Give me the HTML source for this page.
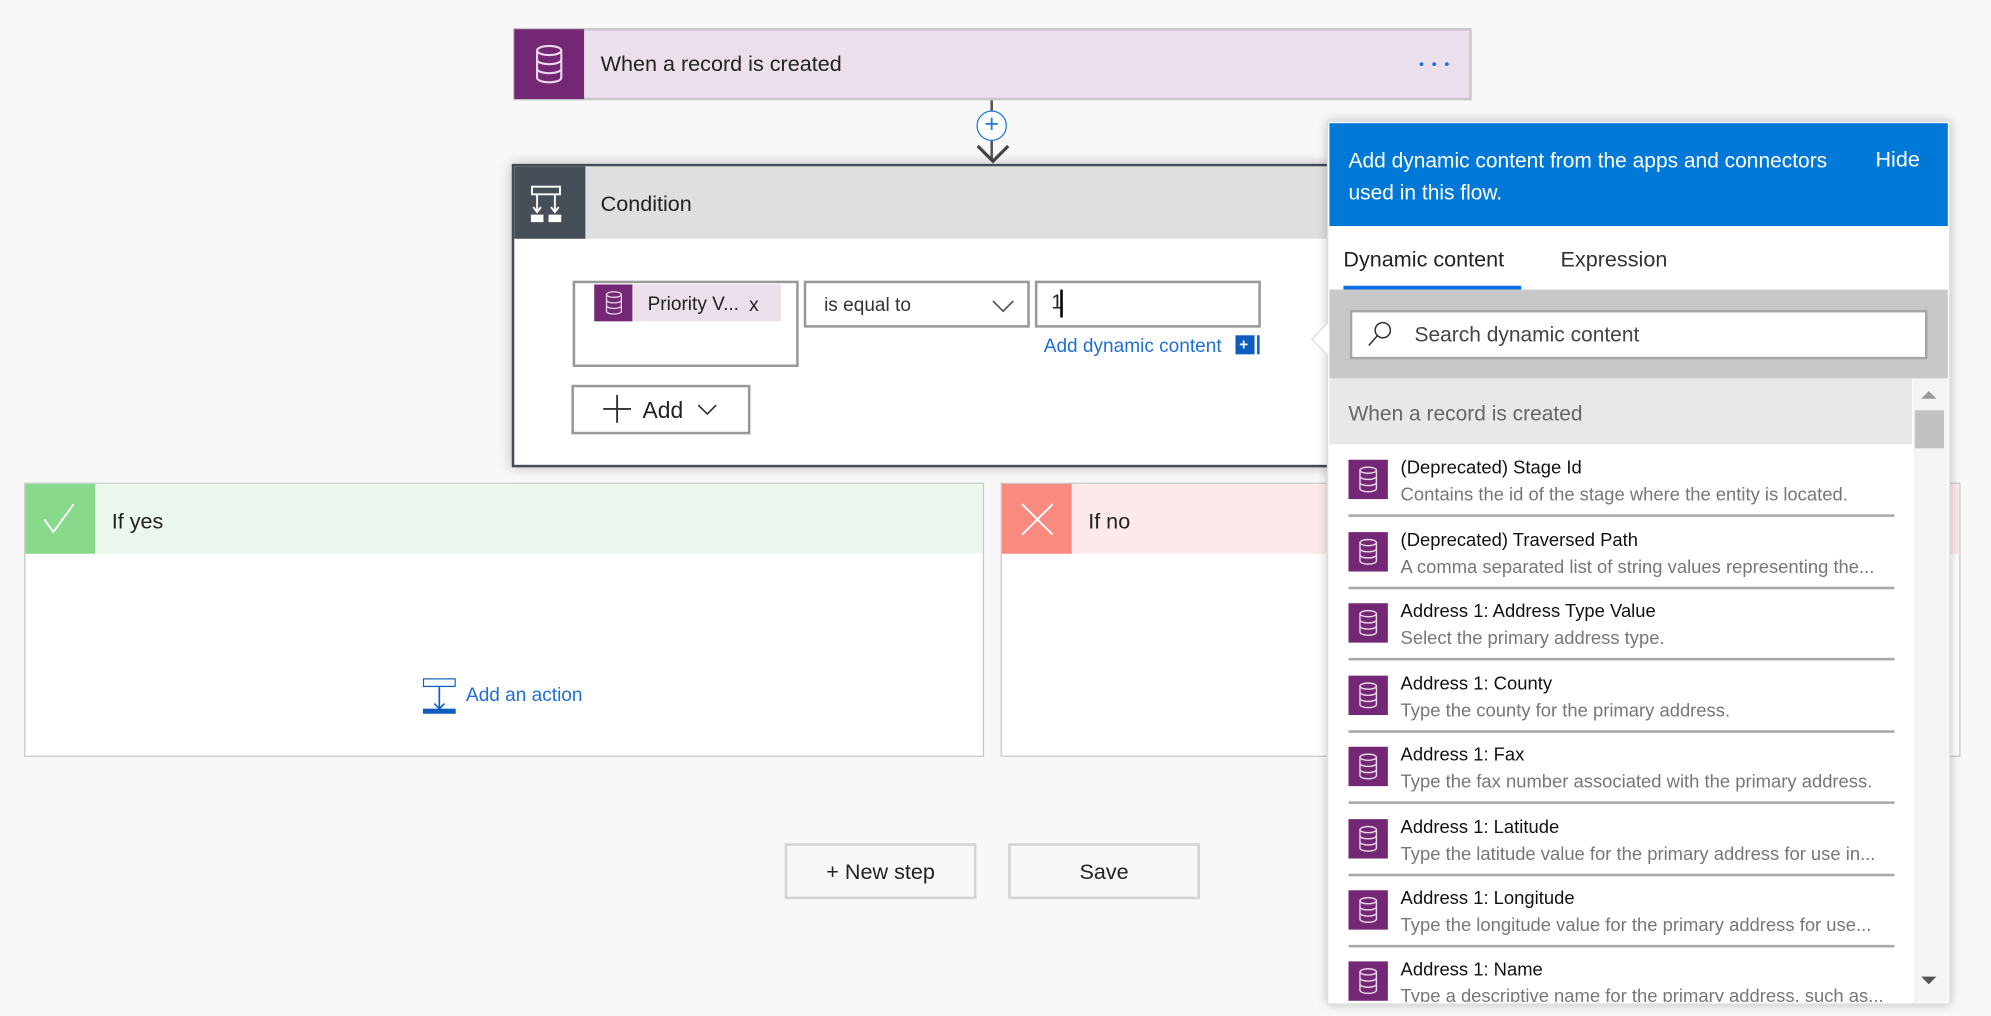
<!DOCTYPE html>
<html><head><meta charset="utf-8"><style>
*{box-sizing:border-box;margin:0;padding:0}
html,body{width:1991px;height:1016px;overflow:hidden;background:#f8f8f8;font-family:"Liberation Sans",sans-serif}
#w{position:absolute;left:0;top:0;width:1568px;height:800px;transform:scale(1.26977,1.27);transform-origin:0 0}
.a{position:absolute}
.db{position:absolute;background:#742774}
.t{white-space:nowrap;position:absolute}
.item{position:absolute;left:1062px;width:430px;height:57px;border-bottom:2px solid #a8a8a8}
.item .db{left:0;top:12px;width:31px;height:31px}
.item .h{position:absolute;left:41px;top:11px;font-size:14.5px;color:#111}
.item .d{position:absolute;left:41px;top:32px;font-size:14.5px;color:#777;white-space:nowrap}
.dot{position:absolute;top:49px;width:3px;height:3px;border-radius:50%;background:#1e6fd9}
</style></head><body><div id="w">
<svg width="0" height="0" style="position:absolute"><defs><symbol id="cyl" viewBox="0 0 20 26"><g fill="none" stroke="#e8d8e8" stroke-width="1.4"><ellipse cx="10" cy="4" rx="8" ry="3"/><path d="M2 4v18c0 1.7 3.6 3 8 3s8-1.3 8-3V4M2 10c0 1.7 3.6 3 8 3s8-1.3 8-3M2 16c0 1.7 3.6 3 8 3s8-1.3 8-3"/></g></symbol></defs></svg>

<!-- trigger -->
<div class="a" style="left:404px;top:22px;width:755px;height:57px;background:#ebdfeb;border:2px solid #c8c8c8"></div>
<div class="db" style="left:405px;top:23px;width:55px;height:55px"><svg style="position:absolute;left:15px;top:12px" width="25" height="31"><use href="#cyl"/></svg></div>
<div class="t" style="left:473px;top:41px;font-size:17px;color:#222">When a record is created</div>
<div class="dot" style="left:1118px"></div><div class="dot" style="left:1128px"></div><div class="dot" style="left:1138px"></div>

<!-- connector -->
<div class="a" style="left:780px;top:79px;width:2px;height:48px;background:#555"></div>
<div class="a" style="left:769px;top:87px;width:24px;height:24px;border:1.5px solid #1e7ad8;border-radius:50%;background:#fff;color:#1e7ad8;font-size:20px;line-height:20px;text-align:center">+</div>
<svg class="a" style="left:768px;top:112px" width="28" height="18"><path d="M2 3l12 12 12-12" stroke="#444" stroke-width="2.5" fill="none"/></svg>

<!-- condition -->
<div class="a" style="left:403px;top:129px;width:660px;height:239px;border:2px solid #444b55;background:#fff;box-shadow:0 0 10px rgba(0,0,0,.25)"></div>
<div class="a" style="left:405px;top:131px;width:660px;height:57px;background:#dedfe1"></div>
<div class="a" style="left:405px;top:131px;width:56px;height:57px;background:#464e58"><svg style="position:absolute;left:13px;top:14px" width="30" height="30"><g stroke="#fff" stroke-width="1.5" fill="none"><rect x="1" y="2" width="22" height="6"/><path d="M5 8v14M19 8v14M2 18l3 4 3-4M16 18l3 4 3-4"/></g><rect x="0" y="24" width="10" height="6" fill="#fff"/><rect x="14" y="24" width="10" height="6" fill="#fff"/></svg></div>
<div class="t" style="left:473px;top:151px;font-size:17px;color:#222">Condition</div>

<div class="a" style="left:451px;top:221px;width:178px;height:68px;border:2px solid #999;background:#fff"></div>
<div class="a" style="left:468px;top:224px;width:147px;height:29px;background:#ebdfeb"></div>
<div class="db" style="left:468px;top:224px;width:30px;height:29px"><svg style="position:absolute;left:8px;top:5px" width="15" height="19" viewBox="0 0 20 26"><use href="#cyl"/></svg></div>
<div class="t" style="left:510px;top:231px;font-size:15px;color:#222">Priority V...</div>
<div class="t" style="left:590px;top:232px;font-size:15px;color:#222">x</div>

<div class="a" style="left:633px;top:221px;width:178px;height:37px;border:2px solid #999;background:#fff"></div>
<div class="t" style="left:649px;top:232px;font-size:15px;color:#333">is equal to</div>
<svg class="a" style="left:781px;top:236px" width="18" height="10"><path d="M1 1l8 8 8-8" stroke="#555" fill="none" stroke-width="1.3"/></svg>
<div class="a" style="left:815px;top:221px;width:178px;height:37px;border:2px solid #999;background:#fff"></div>
<div class="t" style="left:828px;top:230px;font-size:16px;color:#222">1</div>
<div class="a" style="left:835px;top:228px;width:1.5px;height:22px;background:#000"></div>
<div class="t" style="left:822px;top:264px;font-size:15px;color:#1e6fd9">Add dynamic content</div>
<div class="a" style="left:973px;top:264px;width:19px;height:15px;background:#0f5dbf;color:#fff;font-size:12px;line-height:15px;padding-left:3px;font-weight:bold">+</div>
<div class="a" style="left:988px;top:264px;width:2px;height:15px;background:#fff"></div>

<div class="a" style="left:450px;top:303px;width:141px;height:39px;border:2px solid #999;background:#fff"></div>
<svg class="a" style="left:475px;top:311px" width="22" height="22"><path d="M11 0v22M0 11h22" stroke="#333" stroke-width="1.5"/></svg>
<div class="t" style="left:506px;top:313px;font-size:18px;color:#222">Add</div>
<svg class="a" style="left:549px;top:318px" width="16" height="10"><path d="M1 1l7 7 7-7" stroke="#333" fill="none" stroke-width="1.3"/></svg>

<!-- if yes -->
<div class="a" style="left:19px;top:380px;width:756px;height:216px;border:1px solid #c8c8c8;background:#fff"></div>
<div class="a" style="left:20px;top:381px;width:754px;height:55px;background:#ecf7ee"></div>
<div class="a" style="left:20px;top:381px;width:55px;height:55px;background:#88d98b"><svg style="position:absolute;left:14px;top:14px" width="28" height="28"><path d="M1 14l7 10L24 2" stroke="#fff" stroke-width="1.5" fill="none"/></svg></div>
<div class="t" style="left:88px;top:401px;font-size:17px;color:#222">If yes</div>
<svg class="a" style="left:333px;top:534px" width="26" height="28"><rect x="0.5" y="0.5" width="25" height="6" fill="#fff" stroke="#0f5dbf"/><path d="M13 7v17M9 20l4 4 4-4" stroke="#0f5dbf" fill="none" stroke-width="1.3"/><rect x="0" y="24" width="26" height="5" fill="#0f5dbf"/></svg>
<div class="t" style="left:367px;top:539px;font-size:15px;color:#1e6fd9">Add an action</div>

<!-- if no -->
<div class="a" style="left:788px;top:380px;width:756px;height:216px;border:1px solid #c8c8c8;background:#fff"></div>
<div class="a" style="left:789px;top:381px;width:754px;height:55px;background:#fde9e9"></div>
<div class="a" style="left:789px;top:381px;width:55px;height:55px;background:#f88a80"><svg style="position:absolute;left:14px;top:14px" width="28" height="28"><path d="M2 2l24 24M26 2L2 26" stroke="#fff" stroke-width="1.5"/></svg></div>
<div class="t" style="left:857px;top:401px;font-size:17px;color:#222">If no</div>

<!-- buttons -->
<div class="a" style="left:618px;top:664px;width:151px;height:44px;border:2px solid #d4d4d4;background:#f8f8f8;text-align:center;line-height:42px;font-size:17px;color:#222">+ New step</div>
<div class="a" style="left:794px;top:664px;width:151px;height:44px;border:2px solid #d4d4d4;background:#f8f8f8;text-align:center;line-height:42px;font-size:17px;color:#222">Save</div>

<!-- panel -->
<div class="a" style="left:1045px;top:95px;width:491px;height:696px;background:#fff;border:1px solid #ddd;box-shadow:0 0 8px rgba(0,0,0,.25)"></div>
<div class="a" style="left:1036px;top:258px;width:18px;height:18px;background:#fff;transform:rotate(45deg);border-left:1px solid #ddd;border-bottom:1px solid #ddd"></div>
<div class="a" style="left:1047px;top:97px;width:487px;height:81px;background:#0078d7"></div>
<div class="t" style="left:1062px;top:115px;font-size:16.5px;color:#fff;line-height:25px">Add dynamic content from the apps and connectors<br>used in this flow.</div>
<div class="t" style="left:1477px;top:116px;font-size:17px;color:#fff">Hide</div>
<div class="t" style="left:1058px;top:195px;font-size:17px;color:#222">Dynamic content</div>
<div class="t" style="left:1229px;top:195px;font-size:17px;color:#333">Expression</div>
<div class="a" style="left:1058px;top:225px;width:140px;height:3px;background:#0a6ee6"></div>
<div class="a" style="left:1047px;top:228px;width:487px;height:70px;background:#c8c9c7"></div>
<div class="a" style="left:1063px;top:244px;width:455px;height:39px;background:#fff;border:2px solid #a6a6a6"></div>
<svg class="a" style="left:1076px;top:252px" width="22" height="22"><circle cx="13" cy="8" r="6" stroke="#333" fill="none" stroke-width="1.2"/><path d="M9 12L2 20" stroke="#333" stroke-width="1.2"/></svg>
<div class="t" style="left:1114px;top:255px;font-size:16.5px;color:#444">Search dynamic content</div>
<div class="a" style="left:1047px;top:298px;width:459px;height:52px;background:#e8e9e7"></div>
<div class="t" style="left:1062px;top:317px;font-size:16.5px;color:#666">When a record is created</div>
<div class="a" style="left:1507px;top:298px;width:27px;height:491px;background:#f4f4f4"></div>
<svg class="a" style="left:1512px;top:306px" width="14" height="10"><path d="M1 8l6-6 6 6z" fill="#999"/></svg>
<div class="a" style="left:1508px;top:323px;width:23px;height:30px;background:#c2c2c2"></div>
<svg class="a" style="left:1512px;top:767px" width="14" height="10"><path d="M1 2l6 6 6-6z" fill="#555"/></svg>

<div style="position:absolute;left:0;top:0;width:1506px;height:789px;overflow:hidden">
<div class="item" style="top:350px"><div class="db"><svg style="position:absolute;left:7px;top:5px" width="17" height="21" viewBox="0 0 20 26"><use href="#cyl"/></svg></div><div class="h">(Deprecated) Stage Id</div><div class="d">Contains the id of the stage where the entity is located.</div></div>
<div class="item" style="top:407px"><div class="db"><svg style="position:absolute;left:7px;top:5px" width="17" height="21" viewBox="0 0 20 26"><use href="#cyl"/></svg></div><div class="h">(Deprecated) Traversed Path</div><div class="d">A comma separated list of string values representing the...</div></div>
<div class="item" style="top:463px"><div class="db"><svg style="position:absolute;left:7px;top:5px" width="17" height="21" viewBox="0 0 20 26"><use href="#cyl"/></svg></div><div class="h">Address 1: Address Type Value</div><div class="d">Select the primary address type.</div></div>
<div class="item" style="top:520px"><div class="db"><svg style="position:absolute;left:7px;top:5px" width="17" height="21" viewBox="0 0 20 26"><use href="#cyl"/></svg></div><div class="h">Address 1: County</div><div class="d">Type the county for the primary address.</div></div>
<div class="item" style="top:576px"><div class="db"><svg style="position:absolute;left:7px;top:5px" width="17" height="21" viewBox="0 0 20 26"><use href="#cyl"/></svg></div><div class="h">Address 1: Fax</div><div class="d">Type the fax number associated with the primary address.</div></div>
<div class="item" style="top:633px"><div class="db"><svg style="position:absolute;left:7px;top:5px" width="17" height="21" viewBox="0 0 20 26"><use href="#cyl"/></svg></div><div class="h">Address 1: Latitude</div><div class="d">Type the latitude value for the primary address for use in...</div></div>
<div class="item" style="top:689px"><div class="db"><svg style="position:absolute;left:7px;top:5px" width="17" height="21" viewBox="0 0 20 26"><use href="#cyl"/></svg></div><div class="h">Address 1: Longitude</div><div class="d">Type the longitude value for the primary address for use...</div></div>
<div class="item" style="top:745px"><div class="db"><svg style="position:absolute;left:7px;top:5px" width="17" height="21" viewBox="0 0 20 26"><use href="#cyl"/></svg></div><div class="h">Address 1: Name</div><div class="d">Type a descriptive name for the primary address, such as...</div></div>
</div>
</div></body></html>
